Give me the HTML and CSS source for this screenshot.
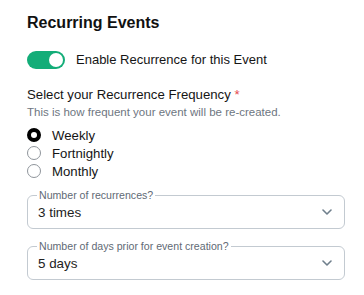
FILE: index.html
```html
<!DOCTYPE html>
<html>
<head>
<meta charset="utf-8">
<link rel="stylesheet" href="styles.css">
</head>
<body>
<div class="panel">
  <h2 class="title">Recurring Events</h2>
  <div class="toggle-row">
    <span class="toggle"><span class="thumb"></span></span>
    <span class="toggle-label">Enable Recurrence for this Event</span>
  </div>
  <div class="question">Select your Recurrence Frequency <span class="req">*</span></div>
  <div class="helper">This is how frequent your event will be re-created.</div>
  <div class="radios">
    <div class="radio-row"><span class="radio checked"></span><span>Weekly</span></div>
    <div class="radio-row"><span class="radio"></span><span>Fortnightly</span></div>
    <div class="radio-row"><span class="radio"></span><span>Monthly</span></div>
  </div>
  <div class="select first">
    <span class="legend">Number of recurrences?</span>
    <span class="value">3 times</span>
    <svg class="chev" width="10" height="6" viewBox="0 0 10 6"><path d="M1 1 L5 5 L9 1" fill="none" stroke="#6f7f8c" stroke-width="1.6" stroke-linecap="round" stroke-linejoin="round"/></svg>
  </div>
  <div class="select second">
    <span class="legend">Number of days prior for event creation?</span>
    <span class="value">5 days</span>
    <svg class="chev" width="10" height="6" viewBox="0 0 10 6"><path d="M1 1 L5 5 L9 1" fill="none" stroke="#6f7f8c" stroke-width="1.6" stroke-linecap="round" stroke-linejoin="round"/></svg>
  </div>
</div>
</body>
</html>
```
FILE: styles.css
```css
html, body {
  margin: 0;
  padding: 0;
  background: #ffffff;
}
body {
  font-family: "Liberation Sans", Arial, sans-serif;
  color: #151515;
}
.panel {
  width: 318px;
  padding: 11px 0 0 27px;
  display: flex;
  flex-direction: column;
}
.title {
  margin: 0;
  font-size: 16px;
  line-height: 24px;
  font-weight: 700;
  color: #111;
}
.toggle-row {
  margin-top: 16px;
  display: flex;
  align-items: center;
  gap: 11px;
  height: 18px;
}
.toggle {
  width: 38px;
  height: 18px;
  border-radius: 9px;
  background: #13ad78;
  display: flex;
  align-items: center;
  justify-content: flex-end;
  padding-right: 2px;
  box-sizing: border-box;
}
.thumb {
  width: 14px;
  height: 14px;
  border-radius: 50%;
  background: #fff;
}
.toggle-label {
  font-size: 13px;
  line-height: 18px;
}
.question {
  margin-top: 17px;
  font-size: 13.2px;
  line-height: 18px;
}
.req {
  color: #e5484d;
}
.helper {
  font-size: 11.5px;
  line-height: 17px;
  color: #6e7681;
}
.radios {
  margin-top: 5px;
  display: flex;
  flex-direction: column;
}
.radio-row {
  display: flex;
  align-items: center;
  height: 18px;
  gap: 11px;
  font-size: 13.2px;
}
.radio {
  width: 14px;
  height: 14px;
  border-radius: 50%;
  border: 1px solid #8f959b;
  box-sizing: border-box;
  background: #fff;
}
.radio.checked {
  border: 4px solid #000;
}
.select {
  position: relative;
  height: 34px;
  border: 1px solid #c3cad1;
  border-radius: 6px;
  box-sizing: border-box;
  display: flex;
  align-items: center;
  padding: 0 12px 0 10px;
}
.select.first {
  margin-top: 15px;
}
.select.second {
  margin-top: 17px;
}
.legend {
  position: absolute;
  top: -8px;
  left: 9px;
  padding: 0 2px;
  background: #fff;
  font-size: 10.6px;
  line-height: 14px;
  color: #5f6a75;
}
.value {
  flex: 1;
  font-size: 13.4px;
  color: #222;
}
.chev {
  display: block;
}
```
